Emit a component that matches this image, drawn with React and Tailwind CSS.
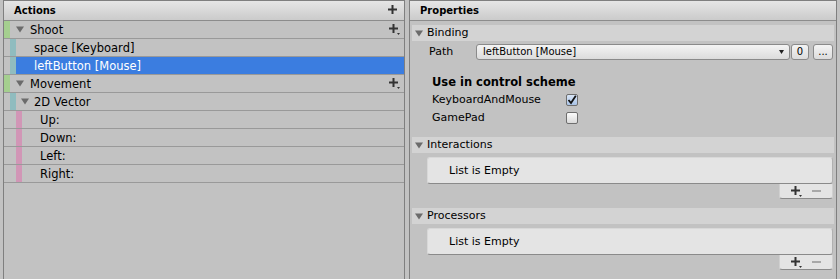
import React from 'react'

const font = { fontFamily: '"DejaVu Sans", Verdana, sans-serif' }

function Tri({ className = '' }) {
  return (
    <svg width="8" height="7" viewBox="0 0 8 7" className={className}>
      <path d="M0 0.5 L8 0.5 L4 6.5 Z" fill="#6b6b6b" />
    </svg>
  )
}

function Plus({ drop = false }) {
  return (
    <svg width="11" height="11" viewBox="0 0 11 11">
      <rect x="3.5" y="0" width="2" height="9" fill="#333" />
      <rect x="0" y="3.5" width="9" height="2" fill="#333" />
      {drop && <path d="M8 9 L11 9 L9.5 11 Z" fill="#333" />}
    </svg>
  )
}

function PanelHeader({ title, add }) {
  return (
    <div className="flex h-[20px] items-center justify-between border-b border-[#8c8c8c] bg-gradient-to-b from-[#e6e6e6] to-[#cbcbcb] pl-[10px] pr-[5px]">
      <span className="text-[10px] font-bold leading-[12px] text-black">{title}</span>
      {add && <Plus />}
    </div>
  )
}

function Row({ bars, selected, children, addButton }) {
  return (
    <div className={`flex h-[18px] items-stretch border-b border-[#999999] leading-[14px] ${selected ? 'bg-[#3b7de0] text-white' : 'text-black'}`}>
      {bars.map((c, i) => (
        <div key={i} className={`w-[6px] shrink-0 ${c}`} />
      ))}
      <div className="flex flex-1 items-center">{children}</div>
      {addButton && (
        <div className="flex items-center pr-[4px]">
          <Plus drop />
        </div>
      )}
    </div>
  )
}

function SectionHeader({ title }) {
  return (
    <div className="flex h-[16px] items-center bg-[#d3d3d3] pl-[3px] leading-[14px] text-black">
      <Tri className="mr-[4px]" />
      <span>{title}</span>
    </div>
  )
}

function Checkbox({ checked }) {
  return (
    <div className={`flex h-[12px] w-[12px] items-center justify-center rounded-[2px] border border-[#6e6e6e] ${checked ? 'bg-gradient-to-b from-[#d9e6f7] to-[#a9c3e6]' : 'bg-gradient-to-b from-[#fbfbfb] to-[#dadada]'}`}>
      {checked && (
        <svg width="10" height="10" viewBox="0 0 10 10">
          <path d="M1.5 5 L4 8 L8.8 0.8" stroke="#111" strokeWidth="1.8" fill="none" />
        </svg>
      )}
    </div>
  )
}

function EmptyList() {
  return (
    <div className="ml-[15px] mr-[1px] mt-[4px]">
      <div className="flex h-[27px] items-center rounded-[3px] border border-[#d8d8d8] border-b-[#8a8a8a] border-r-[#b0b0b0] bg-[#e4e4e4] pl-[21px] leading-[14px] text-black">
        List is Empty
      </div>
      <div className="flex justify-end">
        <div className="flex h-[15px] w-[54px] items-center justify-around rounded-b-[3px] border border-t-0 border-[#d0d0d0] border-b-[#8a8a8a] bg-[#e4e4e4] px-[6px]">
          <Plus drop />
          <div className="h-[2px] w-[9px] bg-[#a8a8a8]" />
        </div>
      </div>
    </div>
  )
}

export default function App() {
  return (
    <div className="flex h-[279px] w-[840px] gap-[4px] overflow-hidden bg-[#c2c2c2] pl-[3px] text-[11px]" style={font}>
      <div className="w-[402px] shrink-0 border border-b-0 border-[#7f7f7f] text-[11.5px]">
        <PanelHeader title="Actions" add />
        <Row bars={['bg-[#a5cf8f]']} addButton>
          <Tri className="ml-[6px] mr-[6px]" />
          <span>Shoot</span>
        </Row>
        <Row bars={['bg-[#c2c2c2]', 'bg-[#90bcbf]']}>
          <span className="ml-[18px]">space [Keyboard]</span>
        </Row>
        <Row bars={['bg-[#c2c2c2]', 'bg-[#90bcbf]']} selected>
          <span className="ml-[18px]">leftButton [Mouse]</span>
        </Row>
        <Row bars={['bg-[#a5cf8f]']} addButton>
          <Tri className="ml-[6px] mr-[6px]" />
          <span>Movement</span>
        </Row>
        <Row bars={['bg-[#c2c2c2]', 'bg-[#90bcbf]']}>
          <Tri className="ml-[5px] mr-[5px]" />
          <span>2D Vector</span>
        </Row>
        {['Up:', 'Down:', 'Left:', 'Right:'].map(l => (
          <Row key={l} bars={['bg-[#c2c2c2]', 'bg-[#c2c2c2]', 'bg-[#d196b6]']}>
            <span className="ml-[18px]">{l}</span>
          </Row>
        ))}
      </div>

      <div className="w-[428px] shrink-0 border border-b-0 border-[#7f7f7f]">
        <PanelHeader title="Properties" />
        <div className="px-[2px] pt-[4px]">
          <SectionHeader title="Binding" />
          <div className="mt-[3px] flex h-[16px] items-center leading-[14px] text-black">
            <span className="w-[64px] pl-[17px]">Path</span>
            <div className="flex h-[16px] w-[314px] items-center justify-between rounded-[3px] border border-[#8a8a8a] bg-gradient-to-b from-[#f4f4f4] to-[#dcdcdc] pl-[6px] pr-[5px] text-[10px]">
              <span>leftButton [Mouse]</span>
              <svg width="5" height="4" viewBox="0 0 5 4"><path d="M0 0 L5 0 L2.5 4 Z" fill="#222" /></svg>
            </div>
            <div className="ml-[1px] flex h-[16px] w-[18px] items-center justify-center rounded-[3px] border border-[#8a8a8a] bg-gradient-to-b from-[#f4f4f4] to-[#dcdcdc] text-[10px]">0</div>
            <div className="ml-[4px] flex h-[16px] w-[20px] items-center justify-center rounded-[3px] border border-[#8a8a8a] bg-gradient-to-b from-[#f4f4f4] to-[#dcdcdc] text-[10px] leading-none">...</div>
          </div>
          <div className="mt-[15px] h-[14px] pl-[20px] text-[11.5px] font-bold leading-[14px] text-black">Use in control scheme</div>
          <div className="mt-[2px] flex h-[18px] items-center pl-[20px] leading-[14px] text-black">
            <span className="w-[134px]">KeyboardAndMouse</span>
            <Checkbox checked />
          </div>
          <div className="flex h-[18px] items-center pl-[20px] leading-[14px] text-black">
            <span className="w-[134px]">GamePad</span>
            <Checkbox />
          </div>
          <div className="mt-[10px]">
            <SectionHeader title="Interactions" />
            <EmptyList />
          </div>
          <div className="mt-[9px]">
            <SectionHeader title="Processors" />
            <EmptyList />
          </div>
        </div>
      </div>
    </div>
  )
}
